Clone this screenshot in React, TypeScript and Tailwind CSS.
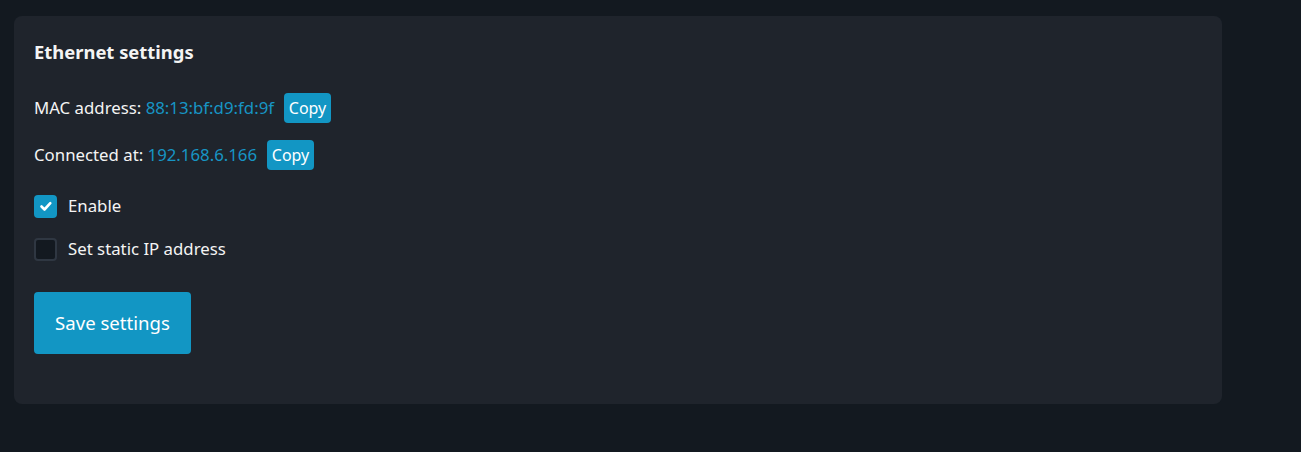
import { useState } from "react";

function CopyButton({ value }: { value: string }) {
  return (
    <button
      type="button"
      onClick={() => navigator.clipboard?.writeText(value)}
      className="ml-[10px] h-[30px] w-[47px] rounded-[4px] bg-[#1296c4] text-base leading-none text-white"
    >
      Copy
    </button>
  );
}

function Checkbox({
  checked,
  onChange,
  label,
}: {
  checked: boolean;
  onChange: (v: boolean) => void;
  label: string;
}) {
  return (
    <label className="flex h-[30px] cursor-pointer items-center gap-[11px]">
      <span
        onClick={() => onChange(!checked)}
        className={
          checked
            ? "flex h-[23px] w-[23px] items-center justify-center rounded-[4px] bg-[#1296c4]"
            : "flex h-[23px] w-[23px] items-center justify-center rounded-[4px] border-2 border-[#2f3742] bg-[#131920]"
        }
      >
        {checked && (
          <svg viewBox="0 0 16 16" className="h-[16px] w-[16px]">
            <path
              d="M3.5 8.5l3 3 5.8-6.3"
              fill="none"
              stroke="white"
              strokeWidth="2.6"
              strokeLinecap="round"
              strokeLinejoin="round"
            />
          </svg>
        )}
      </span>
      <span className="text-[16.8px] text-[#f4f4f4]">{label}</span>
    </label>
  );
}

export default function App() {
  const [enabled, setEnabled] = useState(true);
  const [staticIp, setStaticIp] = useState(false);

  return (
    <div
      className="min-h-[452px] bg-[#131920] pl-[14px] pt-[16px]"
      style={{ fontFamily: '"Noto Sans", "Open Sans", sans-serif' }}
    >
      <div className="w-[1208px] rounded-[8px] bg-[#1f242c] px-5 pb-[50px] pt-6">
        <h2 className="text-[18.4px] font-bold leading-6 text-[#f4f4f4]">
          Ethernet settings
        </h2>

        {/* Info rows */}
        <div className="mt-[29px] flex h-[30px] items-center text-[16.8px] text-[#f4f4f4]">
          MAC address:&nbsp;
          <span className="text-[#1795c4]">88:13:bf:d9:fd:9f</span>
          <CopyButton value="88:13:bf:d9:fd:9f" />
        </div>
        <div className="mt-[17px] flex h-[30px] items-center text-[16.8px] text-[#f4f4f4]">
          Connected at:&nbsp;
          <span className="text-[#1795c4]">192.168.6.166</span>
          <CopyButton value="192.168.6.166" />
        </div>

        {/* Options */}
        <div className="mt-[21px] flex flex-col gap-[13px]">
          <Checkbox checked={enabled} onChange={setEnabled} label="Enable" />
          <Checkbox
            checked={staticIp}
            onChange={setStaticIp}
            label="Set static IP address"
          />
        </div>

        <button
          type="button"
          className="mt-[28px] h-[62px] w-[157px] rounded-[4px] bg-[#1296c4] text-[18.6px] text-white"
        >
          Save settings
        </button>
      </div>
    </div>
  );
}
